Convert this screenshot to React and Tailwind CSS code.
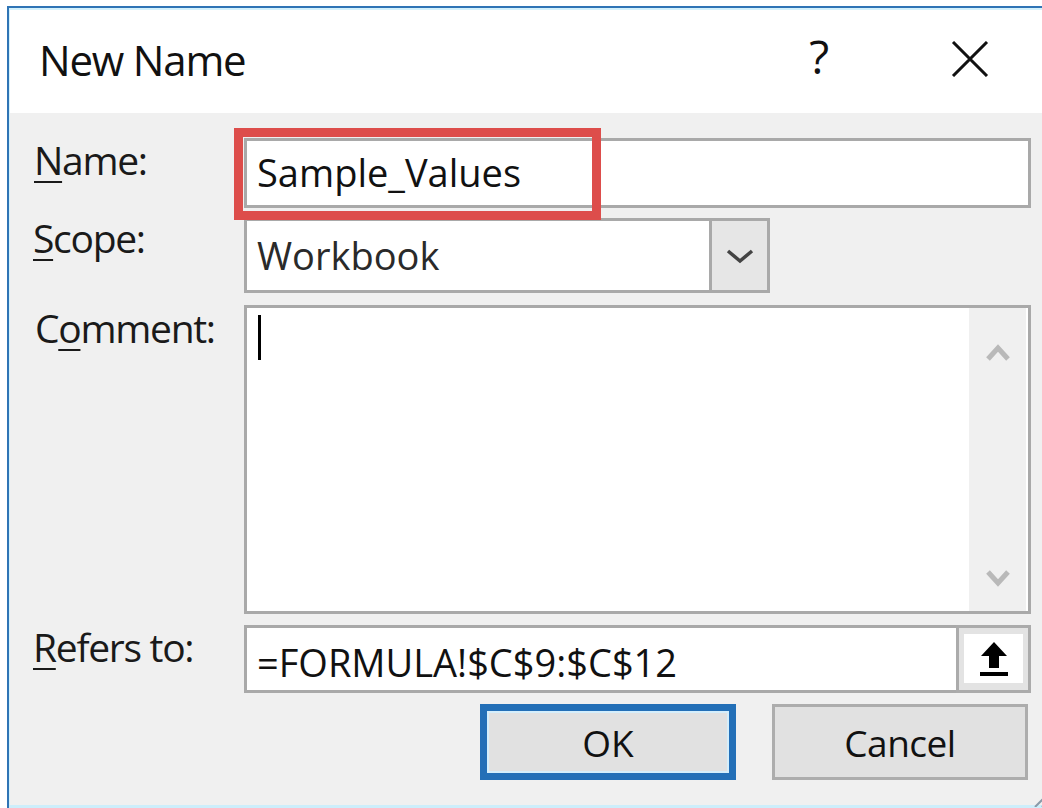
import React from "react";

const FONT = "font-['Open_Sans','Noto_Sans',sans-serif]";

function Label({ accel, before = "", after, className = "" }) {
  return (
    <div className={`text-[39px] leading-none text-[#1a1a1a] tracking-[-1.3px] ${className}`}>
      {before}
      <span className="underline decoration-2 underline-offset-[6px]">{accel}</span>
      {after}
    </div>
  );
}

function ScrollArrow({ up }) {
  return (
    <svg width="26" height="20" viewBox="0 0 26 20">
      <polyline
        points={up ? "3,17 13,6 23,17" : "3,3 13,14 23,3"}
        fill="none"
        stroke="#b9b9b9"
        strokeWidth="5"
      />
    </svg>
  );
}

export default function App() {
  return (
    <div className={`w-[1042px] h-[808px] bg-white overflow-hidden ${FONT}`}>
      <div className="relative ml-[7px] mt-[6px] w-[1040px] h-[802px] border-t-2 border-l-2 border-[#2f74b5] bg-[#f0f0f0] flex flex-col">
        {/* title bar */}
        <div className="h-[105px] shrink-0 bg-white border-t-2 border-l border-[#d4f1fc] flex items-start">
          <div className="pl-[29px] pt-[29px] text-[42px] leading-none text-[#111] tracking-[-1.2px]">
            New Name
          </div>
          <div className="ml-auto flex items-start pt-[29px]">
            <div className="text-[46px] leading-none text-[#111] mr-[122px] -mt-[6px]">?</div>
            <svg width="38" height="36" viewBox="0 0 38 36" className="mr-[58px] mt-[2px]">
              <path d="M2 1 L36 35 M36 1 L2 35" stroke="#111" strokeWidth="3" />
            </svg>
          </div>
        </div>

        {/* body */}
        <div className="flex-1 border-l border-[#d4f1fc] pl-[22px] pt-[25px] grid grid-cols-[212px_787px] gap-y-[10px] content-start">
          <Label accel="N" after="ame:" className="pt-[2px] pl-[2px]" />
          <div className="relative h-[70px] bg-white border-[3px] border-[#a9a9a9] pl-[10px] pt-[12px]">
            <div className="text-[38px] leading-none text-[#111]">Sample_Values</div>
            <div className="absolute -left-[13px] -top-[13px] w-[367px] h-[92px] border-[9px] border-[#dd4d4b]" />
          </div>

          <Label accel="S" after="cope:" className="pt-0 pl-[1px]" />
          <div className="flex h-[75px]">
            <div className="w-[465px] bg-white border-[3px] border-r-0 border-[#a9a9a9] pl-[10px] pt-[15px]">
              <div className="text-[38px] leading-none text-[#2a2a2a]">Workbook</div>
            </div>
            <div className="w-[61px] bg-[#e6e6e6] border-[3px] border-[#a9a9a9] flex items-center justify-center">
              <svg width="32" height="18" viewBox="0 0 32 18">
                <polyline points="4,4 16,14 28,4" fill="none" stroke="#444" strokeWidth="3.5" />
              </svg>
            </div>
          </div>

          <Label accel="o" before="C" after="mment:" className="pt-[3px] pl-[3px] mt-[2px]" />
          <div className="h-[309px] mt-[2px] bg-white border-[3px] border-[#a9a9a9] flex">
            <div className="flex-1 pl-[11px] pt-[7px]">
              <div className="w-[3px] h-[45px] bg-black" />
            </div>
            <div className="w-[57px] bg-[#f0f0f0] flex flex-col items-center justify-between pt-[34px] pb-[22px] mr-[2px]">
              <ScrollArrow up />
              <ScrollArrow />
            </div>
          </div>

          <Label accel="R" after="efers to:" className="pt-[2px] mt-[1px] pl-[1px]" />
          <div className="flex h-[68px] mt-[1px]">
            <div className="flex-1 bg-white border-[3px] border-r-0 border-[#a9a9a9] pl-[10px] pt-[15px]">
              <div className="text-[38px] leading-none text-[#111]">=FORMULA!$C$9:$C$12</div>
            </div>
            <div className="w-[75px] border-[3px] border-[#ababab] bg-[#e3e3e3] p-[6px_5px_7px]">
              <div className="h-full bg-white flex items-center justify-center">
                <svg width="30" height="36" viewBox="0 0 30 36">
                  <path d="M15 1 L28 15 L20 15 L20 27 L10 27 L10 15 L2 15 Z" fill="#000" />
                  <rect x="1" y="31" width="28" height="4" fill="#000" />
                </svg>
              </div>
            </div>
          </div>

          <div />
          <div className="flex justify-end gap-[36px] pr-[3px] mt-[1px]">
            <button className="w-[256px] h-[76px] border-[7px] border-[#236fb7] bg-[#e1e1e1] shadow-[inset_0_0_0_2px_#d5eefb] text-[37px] leading-none text-[#111]">
              OK
            </button>
            <button className="w-[256px] h-[76px] border-[3px] border-[#adadad] bg-[#e1e1e1] text-[37px] leading-none text-[#111] tracking-[-0.5px]">
              Cancel
            </button>
          </div>
        </div>

        <div className="h-[3px] shrink-0 bg-[#cdeefb]" />

        {/* size grip */}
        <svg width="20" height="20" viewBox="0 0 20 20" className="absolute right-[-2px] bottom-[1px]">
          <path d="M20 6 L6 20 M20 13 L13 20" stroke="#8a9aa8" strokeWidth="2" />
        </svg>
      </div>
    </div>
  );
}
